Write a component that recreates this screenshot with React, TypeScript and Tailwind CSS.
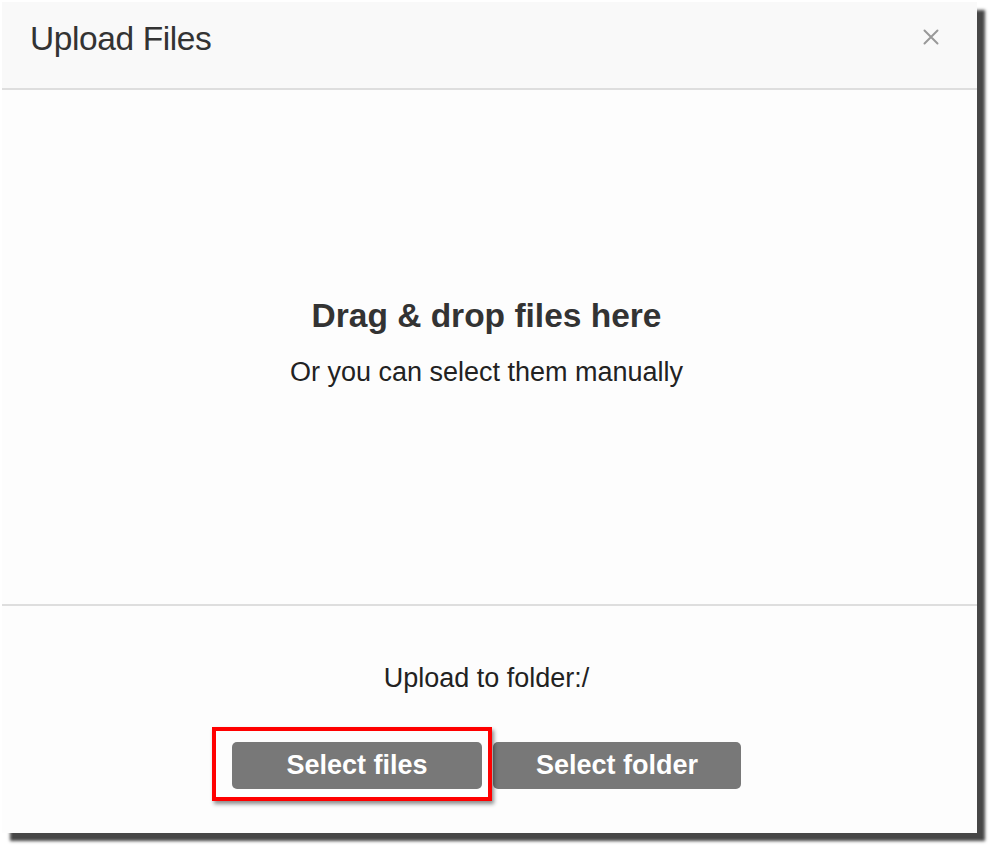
import React from "react";

export default function App() {
  const font = { fontFamily: '"Liberation Sans", Arial, Helvetica, sans-serif' };
  return (
    <div className="w-[991px] h-[852px] bg-white" style={font}>
      <div className="ml-[2px] pt-[2px]">
        <div className="w-[975px] h-[831px] bg-[#fdfdfd] shadow-[8px_8px_3px_rgba(0,0,0,0.72)] flex flex-col">
          <div className="h-[88px] box-border bg-[#f9f9f9] border-b-2 border-[#dedede] flex items-start justify-between pl-[28px] pr-[38px]">
            <h1 className="text-[33.5px] leading-[36px] pt-[19px] text-[#333] font-normal tracking-[-0.4px]">Upload Files</h1>
            <svg className="mt-[27px]" width="16" height="16" viewBox="0 0 16 16">
              <path d="M1.5 1.5 L14.5 14.5 M14.5 1.5 L1.5 14.5" stroke="#999" strokeWidth="2" strokeLinecap="round" />
            </svg>
          </div>
          <div className="h-[516px] box-border border-b-2 border-[#dedede] flex flex-col items-center justify-center pb-[10px] pr-[6px]">
            <div className="text-[33.5px] leading-[40px] font-bold text-[#333]">Drag &amp; drop files here</div>
            <div className="mt-[20px] text-[27px] leading-[32px] text-[#222]">Or you can select them manually</div>
          </div>
          <div className="flex flex-col items-center pt-[55px] pr-[6px]">
            <div className="text-[27px] leading-[34px] text-[#222]">Upload to folder:/</div>
            <div className="mt-[47px] flex gap-[11px]">
              <div className="relative">
                <button className="w-[250px] h-[47px] rounded-[5px] bg-[#787878] text-white font-bold text-[27px] leading-none">Select files</button>
                <div className="absolute left-[-20px] top-[-15px] w-[280px] h-[74px] border-[4px] border-[#f00] shadow-[2px_3px_4px_rgba(0,0,0,0.45)] pointer-events-none" />
              </div>
              <button className="w-[248px] h-[47px] rounded-[5px] bg-[#787878] text-white font-bold text-[27px] leading-none">Select folder</button>
            </div>
          </div>
        </div>
      </div>
    </div>
  );
}
